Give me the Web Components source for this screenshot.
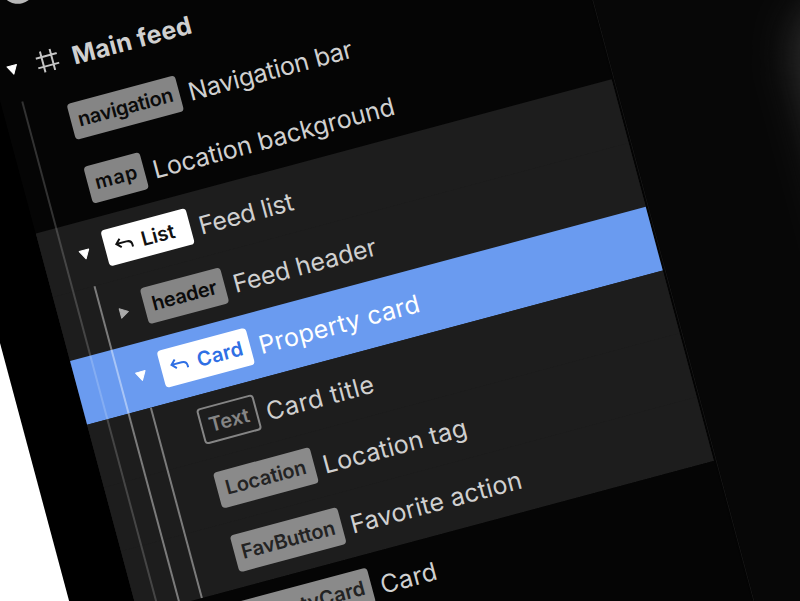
<!DOCTYPE html>
<html lang="en">
<head>
<meta charset="utf-8">
<title>Layers</title>
<style>
html,body{margin:0;padding:0;background:#fff}
body{font-family:Inter,"Liberation Sans",sans-serif}
</style>
</head>
<body>
<layer-stage>
  <layer-tree>
    <layer-row kind="frame"><fit-text slot="label" w="119" size="25" weight="650">Main feed</fit-text></layer-row>
    <layer-row depth="1"><tag-badge slot="badge" w="112.5"><fit-text w="95" size="20" weight="600">navigation</fit-text></tag-badge><fit-text slot="label" w="165.5">Navigation bar</fit-text></layer-row>
    <layer-row depth="1"><tag-badge slot="badge" w="58"><fit-text w="40" size="19.5" weight="600">map</fit-text></tag-badge><fit-text slot="label" w="246">Location background</fit-text></layer-row>
    <layer-row depth="1" caret="down" tone="group"><tag-badge slot="badge" w="88" kind="main" arrow><fit-text w="31.5" size="20" weight="600">List</fit-text></tag-badge><fit-text slot="label" w="93.5">Feed list</fit-text></layer-row>
    <layer-row depth="2" caret="right" tone="group"><tag-badge slot="badge" w="83"><fit-text w="64" size="20" weight="600">header</fit-text></tag-badge><fit-text slot="label" w="144">Feed header</fit-text></layer-row>
    <layer-row depth="2" caret="down" tone="selected"><tag-badge slot="badge" w="92" kind="selected" arrow><fit-text w="44" size="20" weight="600">Card</fit-text></tag-badge><fit-text slot="label" w="162">Property card</fit-text></layer-row>
    <layer-row depth="3" tone="group"><tag-badge slot="badge" w="59" kind="outline"><fit-text w="38.5" size="20" weight="600">Text</fit-text></tag-badge><fit-text slot="label" w="107">Card title</fit-text></layer-row>
    <layer-row depth="3" tone="group"><tag-badge slot="badge" w="100" kind="soft"><fit-text w="80" size="20" weight="600">Location</fit-text></tag-badge><fit-text slot="label" w="144.5">Location tag</fit-text></layer-row>
    <layer-row depth="3" tone="group"><tag-badge slot="badge" w="111" kind="soft"><fit-text w="93.5" size="20" weight="600">FavButton</fit-text></tag-badge><fit-text slot="label" w="173">Favorite action</fit-text></layer-row>
    <layer-row depth="2"><tag-badge slot="badge" w="147.5" kind="soft"><fit-text w="129.5" size="20" weight="600">PropertyCard</fit-text></tag-badge><fit-text slot="label" w="54">Card</fit-text></layer-row>
  </layer-tree>
</layer-stage>
<script>
const shadow = (el, html) => { const r = el.attachShadow({mode:'open'}); r.innerHTML = html; return r; };
const ruler = document.createElement('canvas').getContext('2d');

/* One line of text, tracked so that it fills a given width. */
customElements.define('fit-text', class extends HTMLElement {
  connectedCallback() {
    const size = +(this.getAttribute('size') || 25), weight = this.getAttribute('weight') || 400;
    const text = this.textContent.trim(), side = size * .07;
    ruler.font = `${weight} ${size}px Inter, "Liberation Sans", sans-serif`;
    const w = +this.getAttribute('w') + side * 2;
    const gap = (w - ruler.measureText(text).width) / (text.length - 1);
    shadow(this, `<style>
      :host{display:block;white-space:nowrap;line-height:1.2;font-size:${size}px;font-weight:${weight};
        width:${w}px;margin:0 -${side}px;letter-spacing:${gap}px}
    </style><slot></slot>`);
  }
});

/* Component name chip. */
customElements.define('tag-badge', class extends HTMLElement {
  connectedCallback() {
    const arrow = this.hasAttribute('arrow')
      ? `<svg width="20" height="16" viewBox="0 0 20 16" fill="none" stroke="currentColor" stroke-width="2"><path d="M6.4 1.6 2 6l4.4 4.4M2.2 6h10.3c3.2 0 5 1.8 5 4.8v1.8"/></svg>` : '';
    shadow(this, `<style>
      :host{display:flex;box-sizing:border-box;flex:none;align-items:center;justify-content:center;gap:9px;
        width:${this.getAttribute('w')}px;height:37.3px;border-radius:4px;background:#858585;color:#0b0b0b}
      :host([kind=soft]){background:#8a8a8a;color:#232323}
      :host([kind=main]){background:#fff;color:#111;padding-right:8px}
      :host([kind=selected]){background:#fff;color:#2f6fe4}
      :host([kind=outline]){background:none;border:2px solid #858585;color:#858585}
      svg{display:block;flex:none;margin-top:1px}
    </style>${arrow}<slot></slot>`);
  }
});

customElements.define('layer-row', class extends HTMLElement {
  connectedCallback() {
    const d = +(this.getAttribute('depth') || 0), caret = this.getAttribute('caret');
    const frame = this.getAttribute('kind') === 'frame';
    const shape = frame || caret === 'down' ? '<path d="M6.2 6.6h9.8L11 15.4z" fill="#fff" stroke="#fff" stroke-linejoin="round"/>'
      : caret === 'right' ? '<path d="M7 6.2v9.8l8.2-4.9z" fill="#aaa" stroke="#aaa" stroke-linejoin="round"/>' : '';
    const hash = frame ? '<svg class="hash" width="22" height="22" viewBox="0 0 22 22" stroke="#c4c4c4" stroke-width="2" fill="none"><path d="M6 0v22M16 0v22M0 6h22M0 16h22"/></svg>' : '';
    shadow(this, `<style>
      :host{display:flex;align-items:center;height:65.7px;box-sizing:border-box;color:#d0d0d0;
        padding-left:${frame ? 9 : 31.4 + 23 * (d - 1)}px}
      :host([tone=group]){background:#1d1d1d}
      :host([tone=selected]){background:#6a9bf0;color:#fff}
      svg{display:block;flex:none}
      .caret{margin-right:${frame ? 14.5 : 10}px}
      .hash{margin-right:16px}
      ::slotted([slot=badge]){margin:0 10.4px 1.4px 0}
      ::slotted([slot=label]){padding-top:3px}
    </style><svg class="caret" width="22" height="22" viewBox="0 0 22 22">${shape}</svg>${hash}<slot name="badge"></slot><slot name="label"></slot>`);
  }
});

/* Sidebar list with the nesting guides over its rows. */
customElements.define('layer-tree', class extends HTMLElement {
  connectedCallback() {
    shadow(this, `<style>
      :host{display:block;position:relative;height:1000px;
        background:linear-gradient(#050505 328.5px,#1d1d1d 328.5px 722.7px,#050505 722.7px)}
      .head{height:131.4px;display:flex;align-items:flex-start;padding:67px 0 0 29px;box-sizing:border-box}
      .avatar{width:35px;height:35px;border-radius:50%;background:#b8b8b8}
      i{position:absolute;width:2px;background:#fff}
      .a{left:20px;top:197px;bottom:0;opacity:.18}
      .b{left:42.6px;top:394px;bottom:0;opacity:.42}
      .c{left:65px;top:525.5px;height:197px;opacity:.42}
    </style><div class="head"><div class="avatar"></div></div><slot></slot><i class="a"></i><i class="b"></i><i class="c"></i>`);
  }
});

customElements.define('layer-stage', class extends HTMLElement {
  connectedCallback() {
    shadow(this, `<style>
      :host{display:block;position:relative;width:800px;height:601px;overflow:hidden;background:#fff}
      .plane{display:grid;grid-template-columns:62.6px 598px 1.2px 400px;width:1062px;height:1000px;background:#000;
        transform-origin:0 0;transform:rotate(-15deg) translate(-88.8px,-93.1px)}
      .edge{background:#161616}
      .inner{padding-right:2px;background:#040404}
      .canvas{background:#070707;position:relative;overflow:hidden}
      .glow{position:absolute;left:180px;top:305px;width:260px;height:420px;border-radius:60px;background:#343434;filter:blur(22px)}
    </style><div class="plane"><div class="gutter"></div><div class="inner"><slot></slot></div><div class="edge"></div><div class="canvas"><div class="glow"></div></div></div>`);
  }
});
</script>
</body>
</html>
